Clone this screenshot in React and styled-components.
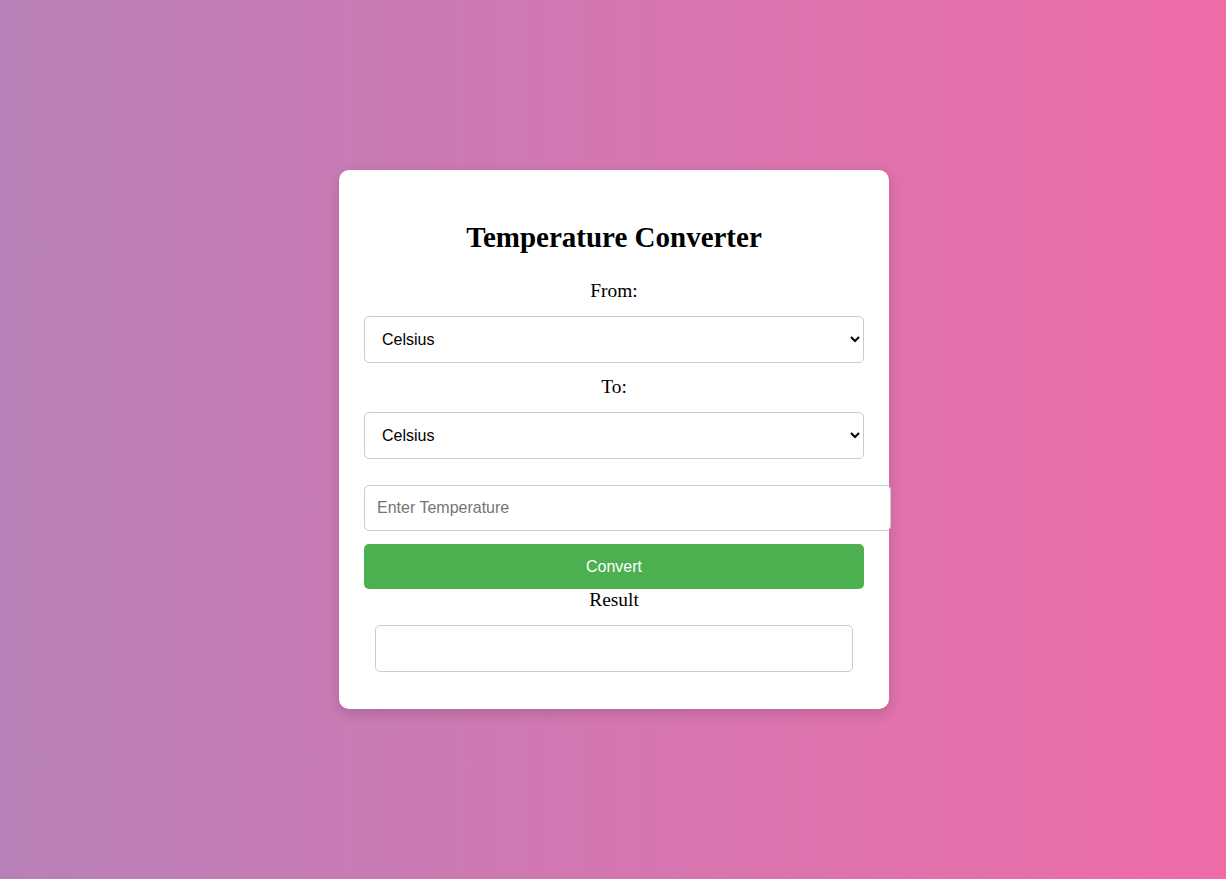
import React, { useState } from 'react';
import styled, { createGlobalStyle } from 'styled-components';

const GlobalStyle = createGlobalStyle`
    html, body {
        margin: 0;
        padding: 0;
    }
    body {
        font-family: "Liberation Serif", "Times New Roman", serif;
        background: linear-gradient(to right, #b981b9, #ef6ca8);
        min-height: 100vh;
    }
`;

const Page = styled.div`
    display: flex;
    justify-content: center;
    align-items: center;
    min-height: 100vh;
    padding-left: 2px;
`;

const Card = styled.div`
    box-sizing: border-box;
    width: 550px;
    padding: 25px;
    background: #fff;
    border-radius: 10px;
    box-shadow: 0 4px 14px rgba(0, 0, 0, 0.15);
    text-align: center;
`;

const Title = styled.h2`
    margin: 26px 0 27px;
    font-size: 29px;
    font-weight: bold;
    line-height: 32px;
`;

const Label = styled.label`
    display: block;
    font-size: 19.4px;
    line-height: 22px;
    margin: ${p => p.$top || 0}px 0 ${p => p.$bottom || 14}px;
`;

const Select = styled.select`
    display: block;
    box-sizing: border-box;
    width: 100%;
    height: 47px;
    padding: 0 12px 0 13px;
    font-family: "Liberation Sans", Arial, sans-serif;
    font-size: 16px;
    color: #000;
    background: #fff;
    border: 1px solid #ccc;
    border-radius: 5px;
`;

const Input = styled.input`
    display: block;
    box-sizing: content-box;
    width: 100%;
    height: 44px;
    padding: 0 13px 0 12px;
    margin: 26px 0 13px;
    font-family: "Liberation Sans", Arial, sans-serif;
    font-size: 16px;
    border: 1px solid #ccc;
    border-radius: 5px;
    &::placeholder {
        color: #757575;
    }
`;

const Button = styled.button`
    display: block;
    width: 100%;
    height: 45px;
    font-family: "Liberation Sans", Arial, sans-serif;
    font-size: 16px;
    color: #fff;
    background: #4caf50;
    border: none;
    border-radius: 5px;
    cursor: pointer;
`;

const ResultBox = styled.div`
    box-sizing: border-box;
    width: 478px;
    height: 47px;
    margin: 0 auto 12px;
    padding: 12px;
    font-family: "Liberation Sans", Arial, sans-serif;
    font-size: 16px;
    border: 1px solid #ccc;
    border-radius: 5px;
`;

const units = ['Celsius', 'Fahrenheit', 'Kelvin'];

const convert = (value, from, to) => {
    const c = from === 'Celsius' ? value
        : from === 'Fahrenheit' ? (value - 32) * 5 / 9
            : value - 273.15;
    if (to === 'Celsius') return c;
    if (to === 'Fahrenheit') return c * 9 / 5 + 32;
    return c + 273.15;
};

const App = () => {
    const [from, setFrom] = useState('Celsius');
    const [to, setTo] = useState('Celsius');
    const [temp, setTemp] = useState('');
    const [result, setResult] = useState('');

    const onConvert = () => {
        const n = parseFloat(temp);
        if (Number.isNaN(n)) return setResult('');
        setResult(`${convert(n, from, to).toFixed(2)} ${to}`);
    };

    return (
        <Page>
            <GlobalStyle />
            <Card>
                <Title>Temperature Converter</Title>

                <Label>From:</Label>
                <Select value={from} onChange={e => setFrom(e.target.value)}>
                    {units.map(u => <option key={u}>{u}</option>)}
                </Select>

                <Label $top={13}>To:</Label>
                <Select value={to} onChange={e => setTo(e.target.value)}>
                    {units.map(u => <option key={u}>{u}</option>)}
                </Select>

                <Input
                    type="number"
                    placeholder="Enter Temperature"
                    value={temp}
                    onChange={e => setTemp(e.target.value)}
                />
                <Button onClick={onConvert}>Convert</Button>

                <Label>Result</Label>
                <ResultBox>{result}</ResultBox>
            </Card>
        </Page>
    );
};

export default App;
